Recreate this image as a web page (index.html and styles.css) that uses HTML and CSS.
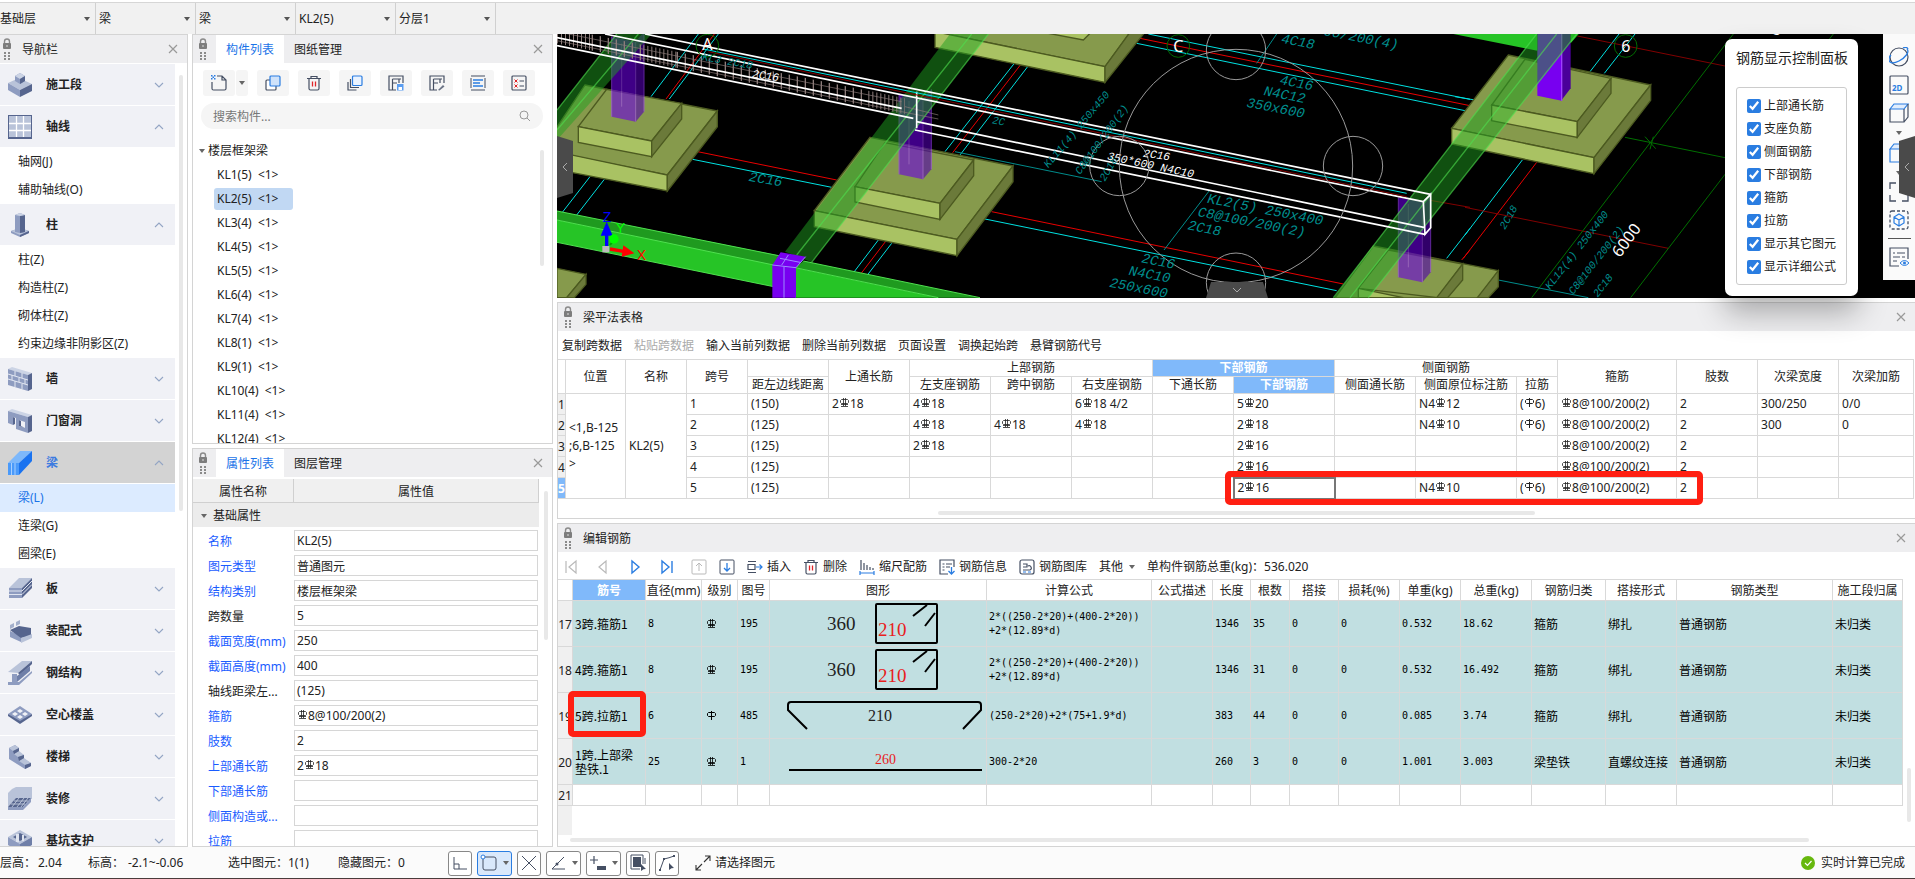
FILE: index.html
```html
<!DOCTYPE html>
<html lang="zh-CN">
  <head>
    <meta charset="UTF-8" />
    <meta name="viewport" content="width=device-width, initial-scale=1.0" />
    <title>梁平法表格</title>
    <link rel="stylesheet" href="styles.css">
  </head>
  <body>
    <!-- shared icons -->
    <svg class="defs">
      <symbol id="grip" viewBox="0 0 10 24">
        <path d="M2.5 7V4.5a2.5 2.5 0 0 1 5 0V7" fill="none" stroke="#8a8a8a" stroke-width="1.4" />
        <rect x="1" y="6" width="8" height="6" rx="1" fill="#7d7d7d" />
        <rect x="4.5" y="8" width="1" height="2" fill="#ddd" />
        <path d="M2 15h2v2H2zM6 15h2v2H6zM2 18h2v2H2zM6 18h2v2H6zM2 21h2v2H2zM6 21h2v2H6z" fill="#8a8a8a" />
      </symbol>
      <symbol id="close" viewBox="0 0 10 10"><path d="M1 1l8 8M9 1l-8 8" fill="none" stroke="#999" stroke-width="1.2" /></symbol>
      <symbol id="down" viewBox="0 0 10 6"><path d="M1 1l4 4 4-4" fill="none" stroke="#93a5c4" stroke-width="1.1" /></symbol>
      <symbol id="up" viewBox="0 0 10 6"><path d="M1 5l4-4 4 4" fill="none" stroke="#93a5c4" stroke-width="1.1" /></symbol>
      <symbol id="hrb" viewBox="0 0 9 9"><path d="M1.5 1.5h6l1 1v2l-1 1h-6l-1-1v-2zM3.500 0v8M5.500 0v8M1 6.500h7M1 8.500h7" fill="none" stroke="currentColor" stroke-width=".8" /></symbol>
      <symbol id="hpb" viewBox="0 0 9 9"><path d="M1.500 1.500h6l1 1v2l-1 1h-6l-1-1v-2zM4.500 0v9" fill="none" stroke="currentColor" /></symbol>
      <symbol id="trash" viewBox="0 0 16 16"><path d="M1 3.500h14M5 3.500v-2h6v2M3 3.500v10q0 1.500 1.500 1.500h7q1.500 0 1.500-1.500v-10" fill="none" stroke="#454f63" stroke-width="1.200" /><path d="M6.500 6.500v5M9.500 6.500v5" stroke="#e0262a" stroke-width="1.300" /></symbol>
    </svg>

    <div class="topbar">
      <label class="combo first"><select aria-label="楼层"><option>基础层</option></select></label>
      <label class="combo"><select aria-label="构件大类"><option>梁</option></select></label>
      <label class="combo"><select aria-label="构件类型"><option>梁</option></select></label>
      <label class="combo"><select aria-label="构件"><option>KL2(5)</option></select></label>
      <label class="combo"><select aria-label="分层"><option>分层1</option></select></label>
    </div>

    <main class="main">
      <nav class="nav">
        <div class="panel-head">
          <svg class="grip"><use href="#grip" /></svg>
          <span class="head-title">导航栏</span>
          <button class="close" aria-label="关闭"><svg><use href="#close" /></svg></button>
        </div>
        <div class="nav-list">
          <button class="group"><svg class="gi" viewBox="0 0 24 24"><path d="M0 10L11 5l13 6-12 6z" fill="#b9c3d9" /><path d="M0 10l12 7v7L0 17z" fill="#8e9cc0" /><path d="M24 11v7l-12 6v-7z" fill="#56658e" /><path d="M7 3l5-3 5 3v5l-5 3-5-3z" fill="#8e9cc0" /><path d="M7 3l5-3 5 3-5 3z" fill="#ccd4e5" /><path d="M12 6l5-3v5l-5 3z" fill="#56658e" /></svg>施工段<svg class="chev"><use href="#down" /></svg></button>
          <button class="group"><svg class="gi" viewBox="0 0 24 24"><path d="M0 0h24v24H0z" fill="#56658e" /><path d="M1 1h22v21H1z" fill="#b9c3d9" /><path d="M8.500 1v21M15.500 1v21M1 8.500h22M1 15.500h22" stroke="#fff" stroke-width="1.300" /></svg>轴线<svg class="chev"><use href="#up" /></svg></button>
          <a class="item" href="#">轴网(J)</a>
          <a class="item" href="#">辅助轴线(O)</a>
          <button class="group"><svg class="gi" viewBox="0 0 24 24"><path d="M3 18l9-3 9 3v2l-9 4-9-4z" fill="#8e9cc0" /><path d="M3 18l9-3 9 3-9 4z" fill="#b9c3d9" /><path d="M12 22l9-4v2l-9 4z" fill="#56658e" /><path d="M7 2l5-2 5 2v17l-5 1-5-1z" fill="#8e9cc0" /><path d="M12 3l5-1v17l-5 1z" fill="#56658e" /><path d="M7 2l5-2 5 2-5 1z" fill="#ccd4e5" /></svg>柱<svg class="chev"><use href="#up" /></svg></button>
          <a class="item" href="#">柱(Z)</a>
          <a class="item" href="#">构造柱(Z)</a>
          <a class="item" href="#">砌体柱(Z)</a>
          <a class="item" href="#">约束边缘非阴影区(Z)</a>
          <button class="group"><svg class="gi" viewBox="0 0 24 24"><path d="M0 2l4-2 20 6-4 2z" fill="#ccd4e5" /><path d="M0 2l20 6v16L0 18z" fill="#8e9cc0" /><path d="M20 8l4-2v16l-4 2z" fill="#56658e" /><path d="M0 7l20 6M0 12l20 6M7 4v5M14 6v5M4 8v5M11 11v4M17 12v5M7 14v6M14 17v5" stroke="#e3e8f2" stroke-width="1" fill="none" /></svg>墙<svg class="chev"><use href="#down" /></svg></button>
          <button class="group"><svg class="gi" viewBox="0 0 24 24"><path d="M0 2l4-2 20 6-4 2z" fill="#ccd4e5" /><path fill-rule="evenodd" d="M0 2l20 6v16l-12-4V9L5 8v8l-5-2zM11 11v6l6 2v-6z" fill="#8e9cc0" /><path d="M20 8l4-2v16l-4 2zM5 8l2 1v6l-2 1zM11 11l2 1v5l4 2-6-2z" fill="#56658e" /></svg>门窗洞<svg class="chev"><use href="#down" /></svg></button>
          <button class="group current"><svg class="gi" viewBox="0 0 24 24"><path d="M0 12L12 0h12L11 12z" fill="#7db8fb" /><path d="M0 12h11v12H0z" fill="#4a9afa" /><path d="M11 12L24 0v10L11 24z" fill="#1a73f0" /><path d="M3.500 12v12M7 12v12" stroke="#a8d0ff" /></svg>梁<svg class="chev"><use href="#up" /></svg></button>
          <a class="item active" href="#">梁(L)</a>
          <a class="item" href="#">连梁(G)</a>
          <a class="item" href="#">圈梁(E)</a>
          <button class="group"><svg class="gi" viewBox="0 0 24 24"><path d="M1 11L11 1h13L14 11z" fill="#b9c3d9" /><path d="M1 11h13v10H1z" fill="#8e9cc0" /><path d="M14 11L24 1v10L14 21z" fill="#56658e" /><path d="M1 14h13L24 4M1 17.500h13L24 7.500" stroke="#dfe4ef" fill="none" /></svg>板<svg class="chev"><use href="#down" /></svg></button>
          <button class="group"><svg class="gi" viewBox="0 0 24 24"><path d="M2 12l11 5v6L2 18z" fill="#8e9cc0" /><path d="M2 11l9-4 12 2v8l-10 2z" fill="#56658e" /><path d="M13 19l11-4v4l-11 5z" fill="#b9c3d9" /><path d="M2 6l4-2v4L2 10zM8 3l4-2v4L8 7z" fill="#a3afcb" /></svg>装配式<svg class="chev"><use href="#down" /></svg></button>
          <button class="group"><svg class="gi" viewBox="0 0 24 24"><path d="M0 11L14 0h10L10 12z" fill="#b9c3d9" /><path d="M10 12L24 0v3L12 14z" fill="#56658e" /><path d="M4 13h5v8H4z" fill="#8e9cc0" /><path d="M9 15L22 5v5L9 21z" fill="#6f7fa8" /><path d="M0 21h11L24 10v2L11 24H0z" fill="#8e9cc0" /></svg>钢结构<svg class="chev"><use href="#down" /></svg></button>
          <button class="group"><svg class="gi" viewBox="0 0 24 24"><path d="M0 11l12-8 12 8-12 9z" fill="#8e9cc0" /><path d="M4 11l3-2 3 2-3 2zM9 8l3-2 3 2-3 2zM9 14l3-2 3 2-3 2zM14 11l3-2 3 2-3 2z" fill="#f0f2f7" /><path d="M0 11l12 7 12-7v2l-12 8-12-8z" fill="#56658e" /></svg>空心楼盖<svg class="chev"><use href="#down" /></svg></button>
          <button class="group"><svg class="gi" viewBox="0 0 24 24"><path d="M1 3l6-3 4 3v5l5 2v4l7 4v3l-6 3L1 14z" fill="#8e9cc0" /><path d="M1 3l6-3 4 3-6 3zM6 9l5-3 5 4-6 2zM11 16l5-3 7 5-6 2z" fill="#b9c3d9" /><path d="M5 6l6-3v3L6 9zM10 12l6-2v3l-5 3zM17 20l6-2v3l-6 3z" fill="#56658e" /></svg>楼梯<svg class="chev"><use href="#down" /></svg></button>
          <button class="group"><svg class="gi" viewBox="0 0 24 24"><path d="M4 2L8 0h16v12H8L0 20V6z" fill="#b9c3d9" /><path d="M0 20L8 11h15l-8 9z" fill="#56658e" /><path d="M6 14h14M3 17h14M11 11l-7 9M16 11l-7 9M20 11l-7 9" stroke="#ccd4e5" stroke-width=".8" /><path d="M0 20h15l8-9v4l-8 8H0z" fill="#8e9cc0" /></svg>装修<svg class="chev"><use href="#down" /></svg></button>
          <button class="group"><svg class="gi" viewBox="0 0 24 24"><path d="M0 8l12-7 12 7-12 7z" fill="#b9c3d9" /><path d="M0 8l12 7v8L0 16z" fill="#8e9cc0" /><path d="M24 8v8l-12 7v-8z" fill="#6f7fa8" /><path d="M5 8l7-4 7 4-7 4z" fill="#56658e" /><path d="M8 5h3v8H8zM14 6h2v6h-2z" fill="#dfe4ef" /></svg>基坑支护<svg class="chev"><use href="#down" /></svg></button>
        </div>
        <i class="vscroll nav-scroll"></i>
      </nav>

      <div class="side">
        <section class="panel">
          <div class="panel-head">
            <svg class="grip"><use href="#grip" /></svg>
            <button class="tab on">构件列表</button>
            <button class="tab">图纸管理</button>
            <button class="close" aria-label="关闭"><svg><use href="#close" /></svg></button>
          </div>
          <div class="tools">
            <div class="split">
              <button class="tool" aria-label="新建"><svg viewBox="0 0 16 16"><path d="M6 1h5l4 4v8.500q0 1.500-1.500 1.500h-11Q1 15 1 13.500V7M11 1v4h4" fill="none" stroke="#454f63" stroke-width="1.200" /><path d="M0 0h1.500v1.500H0zM3 0h1.500v1.500H3zM1.500 1.500H3V3H1.500zM0 3h1.500v1.500H0zM3 3h1.500v1.500H3z" fill="#2a7de1" /></svg></button>
              <button class="tool mini" aria-label="更多"><i class="caret"></i></button>
            </div>
            <button class="tool" aria-label="复制"><svg viewBox="0 0 16 16"><rect x="1" y="5" width="10" height="10" rx="1" fill="#fff" stroke="#454f63" stroke-width="1.200" /><rect x="5" y="1" width="10" height="10" rx="1" fill="#cfe2fa" stroke="#2a7de1" stroke-width="1.200" /></svg></button>
            <button class="tool" aria-label="删除"><svg><use href="#trash" /></svg></button>
            <button class="tool" aria-label="层间复制"><svg viewBox="0 0 16 16"><rect x="5.500" y="1" width="9.500" height="9.500" rx="1" fill="#eaf3ff" stroke="#2a7de1" stroke-width="1.200" /><path d="M3.500 4v8.500H12M1 7v8h8.500" fill="none" stroke="#454f63" stroke-width="1.200" /></svg></button>
            <button class="tool" aria-label="存档"><svg viewBox="0 0 16 16"><path d="M8 15H1V1h14v7M4.500 15V4M4.500 8H9M11 4v4M4.500 4H13" fill="none" stroke="#454f63" stroke-width="1.200" /><path d="M9 9h6.500v6.500H9z" fill="#5b9df0" /><path d="M10.500 12h3.500v3h-3.500z" fill="#fff" /></svg></button>
            <button class="tool" aria-label="提取"><svg viewBox="0 0 16 16"><path d="M8 15H1V1h14v7M4.500 15V4M4.500 8H9M11 4v4M4.500 4H13" fill="none" stroke="#454f63" stroke-width="1.200" /><path d="M9 15l5-5 1.500 1.500-5 4z" fill="#6a7385" /></svg></button>
            <button class="tool" aria-label="添加前后缀"><svg viewBox="0 0 16 16"><path d="M1 1h14M1 15h14" stroke="#454f63" stroke-width="1.200" /><path d="M1 3v10M15 3v10" stroke="#454f63" /><path d="M3 5h10M3 8h7M3 11h10" stroke="#2a7de1" stroke-width="1.300" /></svg></button>
            <button class="tool" aria-label="定义"><svg viewBox="0 0 16 16"><rect x="1" y="1" width="14" height="14" rx="1" fill="none" stroke="#454f63" stroke-width="1.200" /><path d="M8.500 6H13M8.500 11H13" stroke="#454f63" stroke-width="1.200" /><path d="M3.500 4.500l3 3m0-3l-3 3M3.500 9.500l3 3m0-3l-3 3" stroke="#e0262a" /></svg></button>
          </div>
          <label class="search"><input type="text" placeholder="搜索构件..." aria-label="搜索构件"><svg viewBox="0 0 12 12"><circle cx="5" cy="5" r="4" fill="none" stroke="#999" /><path d="M8 8l3 3" stroke="#999" /></svg></label>
          <div class="tree">
            <div class="tree-root"><i class="caret"></i>楼层框架梁</div>
            <ul>
              <li><a href="#">KL1(5) &nbsp;&lt;1&gt;</a></li>
              <li><a href="#" class="sel">KL2(5) &nbsp;&lt;1&gt;</a></li>
              <li><a href="#">KL3(4) &nbsp;&lt;1&gt;</a></li>
              <li><a href="#">KL4(5) &nbsp;&lt;1&gt;</a></li>
              <li><a href="#">KL5(5) &nbsp;&lt;1&gt;</a></li>
              <li><a href="#">KL6(4) &nbsp;&lt;1&gt;</a></li>
              <li><a href="#">KL7(4) &nbsp;&lt;1&gt;</a></li>
              <li><a href="#">KL8(1) &nbsp;&lt;1&gt;</a></li>
              <li><a href="#">KL9(1) &nbsp;&lt;1&gt;</a></li>
              <li><a href="#">KL10(4) &nbsp;&lt;1&gt;</a></li>
              <li><a href="#">KL11(4) &nbsp;&lt;1&gt;</a></li>
              <li><a href="#">KL12(4) &nbsp;&lt;1&gt;</a></li>
            </ul>
          </div>
          <i class="vscroll tree-scroll"></i>
        </section>

        <section class="panel">
          <div class="panel-head">
            <svg class="grip"><use href="#grip" /></svg>
            <button class="tab on">属性列表</button>
            <button class="tab">图层管理</button>
            <button class="close" aria-label="关闭"><svg><use href="#close" /></svg></button>
          </div>
          <div class="props">
            <div class="prop-head"><span>属性名称</span><span>属性值</span></div>
            <div class="prop-group"><i class="caret"></i>基础属性</div>
            <div class="prop"><label for="p1">名称</label><div class="field"><input id="p1" value="KL2(5)"></div></div>
            <div class="prop"><label for="p2">图元类型</label><div class="field"><input id="p2" value="普通图元"></div></div>
            <div class="prop"><label for="p3">结构类别</label><div class="field"><input id="p3" value="楼层框架梁"></div></div>
            <div class="prop plain"><label for="p4">跨数量</label><div class="field"><input id="p4" value="5"></div></div>
            <div class="prop"><label for="p5">截面宽度(mm)</label><div class="field"><input id="p5" value="250"></div></div>
            <div class="prop"><label for="p6">截面高度(mm)</label><div class="field"><input id="p6" value="400"></div></div>
            <div class="prop plain"><label for="p7">轴线距梁左...</label><div class="field"><input id="p7" value="(125)"></div></div>
            <div class="prop"><label for="p8">箍筋</label><div class="field"><svg class="bar"><use href="#hrb" /></svg><input id="p8" value="8@100/200(2)"></div></div>
            <div class="prop"><label for="p9">肢数</label><div class="field"><input id="p9" value="2"></div></div>
            <div class="prop"><label for="p10">上部通长筋</label><div class="field"><span>2</span><svg class="bar"><use href="#hrb" /></svg><input id="p10" value="18"></div></div>
            <div class="prop"><label for="p11">下部通长筋</label><div class="field"><input id="p11"></div></div>
            <div class="prop"><label for="p12">侧面构造或...</label><div class="field"><input id="p12"></div></div>
            <div class="prop"><label for="p13">拉筋</label><div class="field"><input id="p13"></div></div>
          </div>
          <i class="vscroll prop-scroll"></i>
        </section>
      </div>

      <div class="work">
        <div class="view">
          <!-- 3D model view -->
          <svg class="scene" viewBox="6 102 4074 792" preserveAspectRatio="xMinYMin slice">
            <defs>
              <g id="col"><path d="M0 0l72 15v240l-72-15z" fill="#6a00e0" /><path d="M72 15l25-30v240l-25 30z" fill="#5200b0" /><path d="M0 0v240M30 20v190M72 15v240M97-15v240" stroke="#a040ff" stroke-width="3" /></g>
            </defs>
            <!-- axis lines -->
            <g class="cyan">
              <path d="M105 530L22 637M148 538L65 645M430 102L288 290M490 102L343 297M413 478L830 562M1290 657L2345 872M970 720L897 816M1010 730L938 824M1378 190L1170 455M1418 200L1215 465M1780 102L2745 298M1745 130L2730 332M2745 685L2675 775M3192 102L3105 215M3240 102L3148 220M2902 480L2730 705M2700 290L2760 300" />
            </g>
            <g class="red">
              <path d="M478 102L333 297M428 455L845 540M1310 635L2365 852M992 724L917 822M1400 190L1193 458M1755 115L2745 317M2745 750L2720 780M2945 487L2725 775" />
            </g>
            <path class="darkred" d="M3067 108L3510 198M2730 622L3340 745M2620 600L2745 622" />
            <path class="green" d="M3535 102L2930 893M3510 523L3227 893M3835 102L3510 523M3210 412L3510 473M3270 410l32 36M3285 448l10-38" />
            <path class="teal-line" d="M1200 455L1640 545M1963 572L1827 750M2165 102L2105 190M2830 840L3100 893" />

            <!-- footings -->
            <g class="foot">
              <path class="t" d="M6 805l87 18-58 70H6z" /><path class="r" d="M93 823v30l-35 40H35z" />
              <path class="t" d="M90 255l397 78-150 192L-40 450z" /><path class="f" d="M-40 446l377 79v48L-40 500z" /><path class="r" d="M337 525l150-192v47L337 573z" />
              <path class="t" d="M155 268l225 42-90 113-220-43z" /><path class="f" d="M70 380l220 43v47L70 427z" /><path class="r" d="M290 423l90-113v47l-90 113z" />
              <path class="t" d="M945 412l429 86-168 220-428-86z" /><path class="f" d="M778 632l428 86v49l-428-87z" /><path class="r" d="M1206 718l168-220v47l-168 222z" />
              <path class="t" d="M990 428l266 52-101 130-255-50z" /><path class="f" d="M900 560l255 50v48l-255-52z" /><path class="r" d="M1155 610l101-130v47l-101 131z" />
              <path class="t" d="M1140 90h590l-80 110-510-105z" /><path class="f" d="M1140 95l510 105v47L1140 142z" /><path class="r" d="M1650 200l80-110h45l-125 157z" />
              <path class="f" d="M1480 100l105 20 20-20z" />
              <path class="t" d="M2455 738l375 74-60 82h-430z" /><path class="r" d="M2830 812v48l-30 33h-33z" /><path class="t" d="M2500 750l223 42-75 101-238-28z" /><path class="f" d="M2410 865l135 28h-135z" /><path class="r" d="M2723 792v48l-45 53h-33z" />
              <path class="t" d="M2860 165l427 90-170 218-427-88z" /><path class="f" d="M2690 385l427 88v48l-427-89z" /><path class="r" d="M3117 473l170-218v46l-170 220z" />
              <path class="t" d="M2910 178l258 57-101 130-257-50z" /><path class="f" d="M2810 315l257 50v47l-257-50z" /><path class="r" d="M3067 365l101-130v45l-101 132z" />
            </g>

            <!-- columns -->
            <use href="#col" x="170" y="110" opacity=".6" />
            <use href="#col" x="1032" y="283" opacity=".6" />
            <use href="#col" x="2530" y="592" opacity=".6" />
            <path d="M2947 90h73v212l-73-15z" fill="#7800f0" /><path d="M3020 90h27v175l-27 35z" fill="#4a009a" /><path d="M3020 90v212" stroke="#a040ff" stroke-width="4" />
            <path d="M2695 102h252v50zM3047 102h24l-24 28z" fill="#26c426" />

            <!-- beams -->
            <g class="beam">
              <path d="M185 102h105L6 420v-90z" />
              <path d="M1185 102h115L770 787l-80-32z" />
              <path d="M2945 102h120L2440 893h-105z" />
              <path class="edge" d="M250 102L6 390M185 102L6 330M1250 102L725 765M1300 102L770 787M3005 102L2385 893M2945 102L2335 893M3065 102L2440 893" />
            </g>
            <path d="M6 633l684 137-30 30L6 660z" fill="#1f9a1f" /><path d="M6 660l650 135v65L6 727z" fill="#26c426" />
            <path d="M745 783l530 110h-125L720 803z" fill="#1f9a1f" /><path d="M720 803l430 90H720z" fill="#26c426" />
            <path d="M6 633l680 137M6 660l650 135M6 727l650 133M745 783l530 110M720 803l430 90" stroke="#4fe04f" stroke-width="3" />
            <path d="M652 795l25-38 75 13-29 33v90h-71z" fill="#7800f0" /><path d="M652 795l71 8 29-33M687 800v93M675 775l60 12M700 765l-20 30" fill="none" stroke="#9c8cff" stroke-width="3" />

            <!-- rebar cage -->
            <g transform="skewY(11.5)" class="cage">
              <path d="M6 105h104M265 105h100M940 105h110" stroke-dasharray="3 9" />
              <path d="M110 105h155M365 105h575" stroke-dasharray="4 20" />
            </g>
            <path class="cage-line" d="M6 95L1040 305M6 122L1040 335M1040 335l110 22M1050 320l100 25" />
            <path class="white" d="M270 102L2627 583M150 102L2605 605M6 113L1040 325M6 137L1075 355M1085 365L2610 683M1080 390L2610 703M2605 605l22-22v100l-17 20zM1085 275v110" />
            <path class="cyan" d="M445 147L2555 580" />
            <path class="darkred" d="M460 155L2555 590" />

            <!-- orbit circles -->
            <g class="orbit">
              <circle cx="2043" cy="498" r="350" /><circle cx="2043" cy="150" r="89" /><circle cx="1693" cy="498" r="89" /><circle cx="2394" cy="498" r="89" /><circle cx="2043" cy="848" r="89" />
            </g>
            <g class="axis-circle"><circle cx="457" cy="137" r="34" /><circle cx="1870" cy="138" r="34" /><circle cx="3212" cy="138" r="34" /></g>
            <g class="axis-name"><text x="442" y="150">A</text><text x="1855" y="155">C</text><text x="3199" y="155">6</text><text transform="translate(3195 775) rotate(-54)">6000</text><text transform="translate(3665 112) rotate(-54)">00</text></g>

            <g class="note">
              <text transform="translate(580 542) rotate(10)">2C16</text>
              <text transform="translate(2177 128) rotate(11)">4C18</text>
              <text transform="translate(2305 105) rotate(11)">00/200(4)</text>
              <text transform="translate(2173 252) rotate(11)">4C16</text>
              <text transform="translate(2125 285) rotate(11)">N4C12</text>
              <text transform="translate(2073 320) rotate(11)">350x600</text>
              <text transform="translate(1955 608) rotate(11)">KL2(5) 250x400</text>
              <text transform="translate(1927 648) rotate(11)">C8@100/200(2)</text>
              <text transform="translate(1897 688) rotate(11)">2C18</text>
              <text transform="translate(1758 787) rotate(11)">2C16</text>
              <text transform="translate(1720 824) rotate(11)">N4C10</text>
              <text transform="translate(1662 860) rotate(11)">250x600</text>
            </g>
            <g class="note small">
              <text transform="translate(1480 505) rotate(-50)">KL11(4) 250x450</text>
              <text transform="translate(1575 525) rotate(-54)">C8@100/200(2)</text>
              <text transform="translate(1650 545) rotate(-60)">2C18</text>
              <text transform="translate(2850 690) rotate(-60)">2C18</text>
              <text transform="translate(2985 870) rotate(-52)">KL12(4) 250x400</text>
              <text transform="translate(3055 885) rotate(-52)">C8@100/200(2)</text>
              <text transform="translate(3128 893) rotate(-52)">2C18</text>
              <text transform="translate(440 180) rotate(10)">KL3 2C18</text>
              <text transform="translate(1310 370) rotate(10)">2C</text>
            </g>
            <g class="label">
              <text transform="translate(590 232) rotate(8)">2C16</text>
              <text transform="translate(1763 470) rotate(8)">2C16</text>
              <text transform="translate(1655 478) rotate(12)">350*600 N4C10</text>
            </g>

            <!-- coordinate axes -->
            <path d="M155 740v-40" stroke="#00f" stroke-width="10" /><path d="M137 707l18-42 18 42z" fill="#00f" />
            <path d="M165 735l14-18" stroke="#0a0" stroke-width="6" /><circle cx="177" cy="717" r="14" fill="#0f0" />
            <path d="M165 747l40 7" stroke="#f00" stroke-width="10" /><path d="M205 736l33 24-38 10z" fill="#f00" />
            <path d="M142 738h21v19h-21z" fill="#bbb" />
            <g class="axes"><text x="143" y="667" fill="#00f">Z</text><text x="182" y="700" fill="#0f0">Y</text><text x="245" y="780" fill="#f00">X</text></g>
          </svg>

          <button class="handle left" aria-label="收起左侧"><svg viewBox="0 0 6 10"><path d="M5 1L1 5l4 4" fill="none" stroke="#aaa" /></svg></button>
          <button class="handle bottom" aria-label="收起下方"><svg viewBox="0 0 10 6"><path d="M1 1l4 4 4-4" fill="none" stroke="#aaa" /></svg></button>

          <div class="view-tools">
            <button aria-label="动态观察"><svg viewBox="0 0 20 20"><circle cx="10" cy="10" r="9" fill="none" stroke="#454f63" stroke-width="1.200" /><path d="M18 2c3 3-2 9-8 12S0 16 0 13c0-2 1-4 2-5M14 1c2-1 4-1 5 1" fill="none" stroke="#2a7de1" stroke-width="1.300" /></svg></button>
            <button aria-label="二维"><svg viewBox="0 0 20 20"><rect x="1" y="1" width="18" height="18" rx="1" fill="none" stroke="#454f63" stroke-width="1.200" /><text x="3" y="16" class="two-d">2D</text></svg></button>
            <button aria-label="西南等轴测"><svg viewBox="0 0 20 20"><path d="M1 6l4-5h14l-4 5z" fill="#e0edfd" stroke="#2a7de1" stroke-width="1.200" /><path d="M1 6v13h14V6M15 19l4-5V1" fill="none" stroke="#454f63" stroke-width="1.200" /></svg><i class="caret"></i></button>
            <button aria-label="实体显示"><svg viewBox="0 0 20 20"><path d="M1 6l4-5h14l-4 5z" fill="#e0edfd" stroke="#2a7de1" stroke-width="1.200" /><path d="M1 6v13h14V6M15 19l4-5V1" fill="none" stroke="#2a7de1" stroke-width="1.200" /></svg><i class="caret"></i></button>
            <button aria-label="全屏"><svg viewBox="0 0 20 20"><path d="M1 7V1h6M13 1h6v6M1 13v6h6M13 19h6v-6" fill="none" stroke="#454f63" stroke-width="1.300" /></svg></button>
            <button aria-label="局部三维"><svg viewBox="0 0 20 20"><rect x="1" y="1" width="18" height="18" rx="2" fill="none" stroke="#454f63" stroke-width="1.300" stroke-dasharray="3 2" /><path d="M10 4l5 3v6l-5 3-5-3V7zM5 7l5 3 5-3M10 10v6" fill="none" stroke="#2a7de1" stroke-width="1.200" /></svg></button>
            <hr>
            <button aria-label="显示设置"><svg viewBox="0 0 20 20"><path d="M19 12V1H1v18h9M4 6h2M8 6h8M4 10h7M13 10h3M4 14h4" fill="none" stroke="#454f63" stroke-width="1.200" /><path d="M11 16q4.500-5 9 0-4.500 5-9 0z" fill="none" stroke="#2a7de1" /><circle cx="15.500" cy="16" r="1.500" fill="#2a7de1" /></svg></button>
          </div>
          <button class="handle right" aria-label="收起右侧"><svg viewBox="0 0 6 10"><path d="M5 1L1 5l4 4" fill="none" stroke="#aaa" /></svg></button>

          <div class="rebar-panel">
            <h2>钢筋显示控制面板</h2>
            <div class="checks">
              <label><input type="checkbox" checked>上部通长筋</label>
              <label><input type="checkbox" checked>支座负筋</label>
              <label><input type="checkbox" checked>侧面钢筋</label>
              <label><input type="checkbox" checked>下部钢筋</label>
              <label><input type="checkbox" checked>箍筋</label>
              <label><input type="checkbox" checked>拉筋</label>
              <label><input type="checkbox" checked>显示其它图元</label>
              <label><input type="checkbox" checked>显示详细公式</label>
            </div>
          </div>
        </div>

        <section class="panel wide">
          <div class="panel-head">
            <svg class="grip"><use href="#grip" /></svg>
            <span class="head-title">梁平法表格</span>
            <button class="close" aria-label="关闭"><svg><use href="#close" /></svg></button>
          </div>
          <div class="menu">
            <button>复制跨数据</button>
            <button disabled>粘贴跨数据</button>
            <button>输入当前列数据</button>
            <button>删除当前列数据</button>
            <button>页面设置</button>
            <button>调换起始跨</button>
            <button>悬臂钢筋代号</button>
          </div>
          <table class="grid span-grid">
            <colgroup><col><col><col><col><col><col><col><col><col><col><col><col><col><col><col><col><col><col></colgroup>
            <thead>
              <tr><th rowspan="2"></th><th rowspan="2">位置</th><th rowspan="2">名称</th><th rowspan="2">跨号</th><th></th><th rowspan="2">上通长筋</th><th colspan="3">上部钢筋</th><th colspan="2" class="hl">下部钢筋</th><th colspan="3">侧面钢筋</th><th rowspan="2">箍筋</th><th rowspan="2">肢数</th><th rowspan="2">次梁宽度</th><th rowspan="2">次梁加筋</th></tr>
              <tr><th>距左边线距离</th><th>左支座钢筋</th><th>跨中钢筋</th><th>右支座钢筋</th><th>下通长筋</th><th class="hl">下部钢筋</th><th>侧面通长筋</th><th>侧面原位标注筋</th><th>拉筋</th></tr>
            </thead>
            <tbody>
              <tr><th>1</th><td rowspan="5" class="pos">&lt;1,B-125<br>;6,B-125<br>&gt;</td><td rowspan="5">KL2(5)</td><td>1</td><td>(150)</td><td>2<svg class="bar"><use href="#hrb" /></svg>18</td><td>4<svg class="bar"><use href="#hrb" /></svg>18</td><td></td><td>6<svg class="bar"><use href="#hrb" /></svg>18 4/2</td><td></td><td>5<svg class="bar"><use href="#hrb" /></svg>20</td><td></td><td>N4<svg class="bar"><use href="#hrb" /></svg>12</td><td>(<svg class="bar"><use href="#hpb" /></svg>6)</td><td><svg class="bar"><use href="#hrb" /></svg>8@100/200(2)</td><td>2</td><td>300/250</td><td>0/0</td></tr>
              <tr><th>2</th><td>2</td><td>(125)</td><td></td><td>4<svg class="bar"><use href="#hrb" /></svg>18</td><td>4<svg class="bar"><use href="#hrb" /></svg>18</td><td>4<svg class="bar"><use href="#hrb" /></svg>18</td><td></td><td>2<svg class="bar"><use href="#hrb" /></svg>18</td><td></td><td>N4<svg class="bar"><use href="#hrb" /></svg>10</td><td>(<svg class="bar"><use href="#hpb" /></svg>6)</td><td><svg class="bar"><use href="#hrb" /></svg>8@100/200(2)</td><td>2</td><td>300</td><td>0</td></tr>
              <tr><th>3</th><td>3</td><td>(125)</td><td></td><td>2<svg class="bar"><use href="#hrb" /></svg>18</td><td></td><td></td><td></td><td>2<svg class="bar"><use href="#hrb" /></svg>16</td><td></td><td></td><td></td><td><svg class="bar"><use href="#hrb" /></svg>8@100/200(2)</td><td>2</td><td></td><td></td></tr>
              <tr><th>4</th><td>4</td><td>(125)</td><td></td><td></td><td></td><td></td><td></td><td>2<svg class="bar"><use href="#hrb" /></svg>16</td><td></td><td></td><td></td><td><svg class="bar"><use href="#hrb" /></svg>8@100/200(2)</td><td>2</td><td></td><td></td></tr>
              <tr><th class="hl">5</th><td>5</td><td>(125)</td><td></td><td></td><td></td><td></td><td></td><td class="picked">2<svg class="bar"><use href="#hrb" /></svg>16</td><td></td><td>N4<svg class="bar"><use href="#hrb" /></svg>10</td><td>(<svg class="bar"><use href="#hpb" /></svg>6)</td><td><svg class="bar"><use href="#hrb" /></svg>8@100/200(2)</td><td>2</td><td></td><td></td></tr>
            </tbody>
          </table>
          <i class="hscroll span-scroll"></i>
          <div class="mark mark-row"></div>
        </section>

        <section class="panel wide">
          <div class="panel-head">
            <svg class="grip"><use href="#grip" /></svg>
            <span class="head-title">编辑钢筋</span>
            <button class="close" aria-label="关闭"><svg><use href="#close" /></svg></button>
          </div>
          <div class="edit-tools">
            <div class="steps">
              <button aria-label="首行"><svg viewBox="0 0 16 16"><path d="M3 2v12M13 2v12L6 8z" fill="none" stroke="#b9b9b9" stroke-width="1.200" /></svg></button>
              <button aria-label="上一行"><svg viewBox="0 0 16 16"><path d="M11 2v12L4 8z" fill="none" stroke="#b9b9b9" stroke-width="1.200" /></svg></button>
              <button aria-label="下一行"><svg viewBox="0 0 16 16"><path d="M5 2v12l7-6z" fill="none" stroke="#2a7de1" stroke-width="1.400" /></svg></button>
              <button aria-label="末行"><svg viewBox="0 0 16 16"><path d="M13 2v12M3 2v12l7-6z" fill="none" stroke="#2a7de1" stroke-width="1.400" /></svg></button>
            </div>
            <div class="moves">
              <button aria-label="上移"><svg viewBox="0 0 16 16"><rect x="1" y="1" width="14" height="14" rx="1" fill="none" stroke="#b9b9b9" /><path d="M8 12V4M5 7l3-3 3 3" fill="none" stroke="#b9b9b9" /></svg></button>
              <button aria-label="下移"><svg viewBox="0 0 16 16"><rect x="1" y="1" width="14" height="14" rx="1" fill="none" stroke="#454f63" /><path d="M8 4v8M5 9l3 3 3-3" fill="none" stroke="#2a7de1" stroke-width="1.300" /></svg></button>
            </div>
            <button><svg viewBox="0 0 16 16"><path d="M1 2.500h8M1 13.500h8M1 5.500h7v5H1z" fill="none" stroke="#454f63" stroke-width="1.200" /><path d="M9 8h6M12.500 5.500L15 8l-2.500 2.500" fill="none" stroke="#2a7de1" stroke-width="1.200" /></svg>插入</button>
            <button><svg><use href="#trash" /></svg>删除</button>
            <button><svg viewBox="0 0 16 16"><path d="M2 1v10M5 4v7M8 6v5M11 8v3M14 9v2" stroke="#454f63" stroke-width="1.200" /><path d="M1 14h14M1 12v4M15 12v4" stroke="#2a7de1" stroke-width="1.200" /></svg>缩尺配筋</button>
            <button><svg viewBox="0 0 16 16"><path d="M15 8V1H1v14h8M3.500 5h2M7 5h6M3.500 8h2M7 8h4M3.500 11h2" fill="none" stroke="#454f63" stroke-width="1.200" /><path d="M12.500 8v7M9.500 12l3 3 3-3" fill="none" stroke="#2a7de1" stroke-width="1.300" /></svg>钢筋信息</button>
            <button><svg viewBox="0 0 16 16"><rect x="1" y="1" width="14" height="14" rx="2" fill="none" stroke="#454f63" stroke-width="1.200" /><path d="M4 5h4v3H4M4 11h7q2-1 1-3t-3-1" fill="none" stroke="#454f63" stroke-width="1.200" /><path d="M4 13h3M9 13h3" stroke="#2a7de1" /></svg>钢筋图库</button>
            <button class="other">其他<i class="caret"></i></button>
            <span>单构件钢筋总重(kg)：536.020</span>
          </div>
          <div class="edit-body">
            <table class="grid bar-grid">
              <colgroup><col><col><col><col><col><col><col><col><col><col><col><col><col><col><col><col><col><col></colgroup>
              <thead>
                <tr><th></th><th class="hl">筋号</th><th>直径(mm)</th><th>级别</th><th>图号</th><th>图形</th><th>计算公式</th><th>公式描述</th><th>长度</th><th>根数</th><th>搭接</th><th>损耗(%)</th><th>单重(kg)</th><th>总重(kg)</th><th>钢筋归类</th><th>搭接形式</th><th>钢筋类型</th><th>施工段归属</th></tr>
              </thead>
              <tbody>
                <tr><th>17</th><td class="zh">3跨.箍筋1</td><td>8</td><td class="grade"><svg class="bar"><use href="#hrb" /></svg></td><td>195</td><td class="shape"><svg viewBox="0 0 216 45"><text x="57" y="29" class="big">360</text><rect x="106" y="3" width="61" height="39" rx="1" /><text x="108" y="35" class="big dim">210</text><path d="M157 4l-14 11M165 12l-10 13" /></svg></td><td>2*((250-2*20)+(400-2*20))<br>+2*(12.89*d)</td><td></td><td>1346</td><td>35</td><td>0</td><td>0</td><td>0.532</td><td>18.62</td><td class="zh">箍筋</td><td class="zh">绑扎</td><td class="zh">普通钢筋</td><td class="zh">未归类</td></tr>
                <tr><th>18</th><td class="zh">4跨.箍筋1</td><td>8</td><td class="grade"><svg class="bar"><use href="#hrb" /></svg></td><td>195</td><td class="shape"><svg viewBox="0 0 216 45"><text x="57" y="29" class="big">360</text><rect x="106" y="3" width="61" height="39" rx="1" /><text x="108" y="35" class="big dim">210</text><path d="M157 4l-14 11M165 12l-10 13" /></svg></td><td>2*((250-2*20)+(400-2*20))<br>+2*(12.89*d)</td><td></td><td>1346</td><td>31</td><td>0</td><td>0</td><td>0.532</td><td>16.492</td><td class="zh">箍筋</td><td class="zh">绑扎</td><td class="zh">普通钢筋</td><td class="zh">未归类</td></tr>
                <tr><th>19</th><td class="zh">5跨.拉筋1</td><td>6</td><td class="grade"><svg class="bar"><use href="#hpb" /></svg></td><td>485</td><td class="shape"><svg viewBox="0 0 216 45"><path d="M37 36L18 17V12q0-3 3-3h187q3 0 3 3v5l-18 19" /><text x="98" y="28" class="mid">210</text></svg></td><td>(250-2*20)+2*(75+1.9*d)</td><td></td><td>383</td><td>44</td><td>0</td><td>0</td><td>0.085</td><td>3.74</td><td class="zh">箍筋</td><td class="zh">绑扎</td><td class="zh">普通钢筋</td><td class="zh">未归类</td></tr>
                <tr><th>20</th><td class="zh">1跨.上部梁<br>垫铁.1</td><td>25</td><td class="grade"><svg class="bar"><use href="#hrb" /></svg></td><td>1</td><td class="shape"><svg viewBox="0 0 216 45"><text x="105" y="25" class="low dim">260</text><path d="M19 31h193" /></svg></td><td>300-2*20</td><td></td><td>260</td><td>3</td><td>0</td><td>0</td><td>1.001</td><td>3.003</td><td class="zh">梁垫铁</td><td class="zh">直螺纹连接</td><td class="zh">普通钢筋</td><td class="zh">未归类</td></tr>
                <tr class="blank"><th>21</th><td></td><td></td><td></td><td></td><td></td><td></td><td></td><td></td><td></td><td></td><td></td><td></td><td></td><td></td><td></td><td></td><td></td></tr>
              </tbody>
            </table>
            <i class="gutter"></i>
          </div>
          <i class="hscroll bar-scroll"></i>
          <i class="vscroll edit-scroll"></i>
          <div class="mark mark-cell"></div>
        </section>
      </div>
    </main>

    <footer class="status">
      <span class="s1">层高：</span><span class="s2">2.04</span>
      <span class="s3">标高：</span><span class="s4">-2.1~-0.06</span>
      <span class="s5">选中图元：</span><span class="s6">1(1)</span>
      <span class="s7">隐藏图元：</span><span class="s8">0</span>
      <div class="snaps">
        <button aria-label="正交"><svg viewBox="0 0 18 18"><path d="M3 3v12h13M3 10h5v5" fill="none" stroke="#454f63" /></svg></button>
        <button class="on" aria-label="捕捉"><svg viewBox="0 0 18 18"><rect x="3" y="3" width="13" height="13" rx="2" fill="none" stroke="#454f63" /><circle cx="3" cy="3" r="2" fill="#fff" stroke="#2a7de1" /></svg><i class="caret"></i></button>
        <button aria-label="交点"><svg viewBox="0 0 18 18"><path d="M2 2l14 14M16 2L2 16" fill="none" stroke="#454f63" /></svg></button>
        <button aria-label="角度"><svg viewBox="0 0 18 18"><path d="M15 3L3 15h13" fill="none" stroke="#454f63" /><circle cx="8" cy="10" r="1.500" fill="#454f63" /></svg><i class="caret"></i></button>
        <button aria-label="动态输入"><svg viewBox="0 0 18 18"><path d="M1 6h8M5 2v8" stroke="#454f63" stroke-width="1.200" /><path d="M8 12h9v4H8z" fill="#454f63" /></svg><i class="caret"></i></button>
        <button aria-label="选择"><svg viewBox="0 0 18 18"><path d="M4 3h8v10H4z" fill="#454f63" /><path d="M2 1h12v9M2 1v14h9M16 4v6" fill="none" stroke="#454f63" /><path d="M12 10l5 5-2.500.2L12 17z" fill="#454f63" /></svg></button>
        <button aria-label="折线"><svg viewBox="0 0 18 18"><path d="M2 16L6 5q5-1 10-3" fill="none" stroke="#454f63" /><path d="M11 9l5 5-2.500.2L11 16zM1 15h2v2H1zM5 4h2v2H5zM15 1h2v2h-2z" fill="#454f63" /></svg></button>
      </div>
      <svg class="expand" viewBox="0 0 16 16"><path d="M9 7l6-6M10 1h5v5M7 9l-6 6M1 10v5h5" fill="none" stroke="#333" stroke-width="1.100" /></svg>
      <span>请选择图元</span>
      <span class="done"><svg viewBox="0 0 14 14"><circle cx="7" cy="7" r="7" fill="#67b80e" /><path d="M4 7l2.500 2.500L10.500 5" fill="none" stroke="#fff" stroke-width="1.200" /></svg>实时计算已完成</span>
    </footer>
  </body>
</html>
```
FILE: styles.css
```css
* {
  box-sizing: border-box;
}

body {
  margin: 0;
  height: 100vh;
  display: flex;
  flex-direction: column;
  overflow: hidden;
  background: #fff;
  color: #222;
  font: 12px/16px "Noto Sans", "Noto Sans CJK SC", sans-serif;
  border-bottom: 1px solid #4a3c3c;
}

button,
input,
select {
  font: inherit;
  color: inherit;
  border: 0;
  padding: 0;
  margin: 0;
  background: none;
}

a {
  color: inherit;
  text-decoration: none;
}

.defs {
  position: absolute;
  width: 0;
  height: 0;
}

.caret {
  flex: none;
  width: 0;
  height: 0;
  border: 3px solid transparent;
  border-top: 4px solid #666;
  border-bottom: 0;
}

/* top bar */
.topbar {
  flex: none;
  display: flex;
  height: 32px;
  margin-top: 2px;
  background: #f1f1f1;
  border-top: 1px solid #d6d6d6;
}

.combo {
  position: relative;
  width: 100px;
  border-right: 1px solid #d0d0d0;
}

.combo.first {
  width: 96px;
}

.combo::after {
  content: "";
  position: absolute;
  right: 5px;
  top: 14px;
  border: 3px solid transparent;
  border-top: 4px solid #555;
  border-bottom: 0;
}

.combo select {
  appearance: none;
  width: 100%;
  height: 100%;
  padding-left: 3px;
}

.combo.first select {
  padding-left: 0;
}

.main {
  flex: 1;
  min-height: 0;
  display: flex;
  gap: 4px;
}

/* panels */
.panel {
  position: relative;
  display: flex;
  flex-direction: column;
  min-height: 0;
  overflow: hidden;
  border: 1px solid #d4d4d4;
}

.panel.wide {
  border-right: 0;
}

.panel-head {
  flex: none;
  display: flex;
  align-items: center;
  height: 28px;
  background: #eeeef0;
}

.head-title {
  padding-top: 2px;
}

.grip {
  flex: none;
  width: 10px;
  height: 24px;
  margin: 0 8px 0 5px;
}

.nav .grip {
  margin: 0 10px 0 2px;
}

.panel.wide .grip {
  margin: 0 10px 0 5px;
}

.close {
  margin-left: auto;
  width: 10px;
  height: 10px;
  margin-right: 9px;
}

.close svg {
  display: block;
  width: 10px;
  height: 10px;
}

.tab {
  height: 28px;
  padding: 2px 10px 0;
}

.tab.on {
  background: #fff;
  color: #1a73e8;
}

.vscroll,
.hscroll {
  position: absolute;
  background: #e8e8e8;
  border-radius: 2px;
}

/* navigation */
.nav {
  position: relative;
  flex: none;
  width: 188px;
  display: flex;
  flex-direction: column;
  overflow: hidden;
  border: 1px solid #d4d4d4;
  border-left: 0;
}

.nav-list {
  width: 175px;
  flex: 1;
  min-height: 0;
  overflow: hidden;
  margin-top: 1px;
}

.group {
  display: flex;
  align-items: center;
  width: 100%;
  height: 42px;
  padding: 0 11px 0 8px;
  background: #f0f1f6;
  border-bottom: 1px solid #fff;
  font-weight: bold;
}

.gi {
  width: 24px;
  height: 24px;
  margin-right: 14px;
}

.chev {
  width: 10px;
  height: 6px;
  margin-left: auto;
}

.group.current {
  background: #d3d3d3;
  color: #3d7be0;
}

.item {
  display: block;
  height: 28px;
  padding-left: 18px;
  line-height: 28px;
}

.item.active {
  background: #dcebff;
  color: #1a73e8;
}

.nav-scroll {
  right: 4px;
  top: 40px;
  width: 4px;
  height: 436px;
}

/* component list and properties */
.side {
  flex: none;
  width: 361px;
  display: grid;
  grid-template-rows: 410fr 399fr;
  gap: 4px;
}

.tools {
  flex: none;
  display: flex;
  gap: 9px;
  padding: 7px 10px;
}

.split {
  display: flex;
  gap: 1px;
}

.tool {
  display: flex;
  align-items: center;
  justify-content: center;
  width: 32px;
  height: 26px;
  background: #f5f5f5;
  border-radius: 3px;
}

.tool.mini {
  width: 12px;
}

.tool svg {
  width: 16px;
  height: 16px;
}

.search {
  flex: none;
  display: flex;
  align-items: center;
  height: 26px;
  margin: 0 9px 0 8px;
  padding: 0 12px;
  background: #f5f5f5;
  border-radius: 13px;
}

.search input {
  flex: 1;
  padding-top: 2px;
  outline: 0;
}

.search input::placeholder {
  color: #777;
}

.search svg {
  width: 12px;
  height: 12px;
}

.tree {
  flex: 1;
  min-height: 0;
  overflow: hidden;
  padding-top: 10px;
}

.tree-root,
.prop-group {
  display: flex;
  align-items: center;
  gap: 3px;
  height: 24px;
  padding-left: 6px;
}

.tree ul {
  margin: 0;
  padding: 0 0 0 21px;
  list-style: none;
}

.tree li {
  height: 24px;
}

.tree a {
  display: inline-block;
  min-width: 79px;
  margin-top: 1px;
  padding: 3px;
  border-radius: 3px;
}

.tree a.sel {
  background: #c1d8f3;
}

.tree-scroll {
  right: 8px;
  top: 115px;
  width: 4px;
  height: 116px;
}

.props {
  width: 346px;
  margin-top: 2px;
}

.prop-head {
  display: grid;
  grid-template-columns: 101px 1fr;
  height: 24px;
  text-align: center;
  background: #f0f0f0;
  border-bottom: 1px solid #d0d0d0;
}

.prop-head span {
  padding-top: 5px;
  border-right: 1px solid #d0d0d0;
}

.prop-group {
  padding: 2px 0 0 8px;
  gap: 6px;
  background: #ececec;
  margin-bottom: 1px;
}

.prop {
  display: grid;
  grid-template-columns: 101px 1fr;
  align-items: center;
  height: 25px;
  color: #222;
}

.prop label {
  padding: 2px 0 0 15px;
  color: #1a5cff;
  white-space: nowrap;
}

.prop.plain label {
  color: #222;
}

.field {
  display: flex;
  align-items: center;
  height: 21px;
  padding-left: 2px;
  margin-right: 1px;
  border: 1px solid #d6d6d6;
}

.field input {
  flex: 1;
  min-width: 0;
  height: 19px;
  outline: 0;
}

.prop-scroll {
  right: 4px;
  top: 42px;
  width: 4px;
  height: 149px;
}

.bar {
  width: 9px;
  height: 9px;
  margin: 0 1px;
  vertical-align: 1px;
}

.field .bar {
  margin-bottom: 3px;
}

/* model view */
.work {
  flex: 1;
  min-width: 0;
  display: grid;
  grid-template-rows: 264fr 217fr 324fr;
  gap: 4px;
}

.view {
  position: relative;
  min-height: 0;
  background: #000;
}

.scene {
  display: block;
  width: 100%;
  height: 100%;
}

.cyan,
.red,
.darkred,
.green,
.teal-line,
.white,
.cage-line,
.orbit,
.axis-circle {
  fill: none;
  stroke-width: 3;
}

.cyan { stroke: #00e0e0; }
.red { stroke: #e80000; }
.darkred { stroke: #800000; }
.green { stroke: #007000; }
.teal-line { stroke: #008b8b; }
.white { stroke: #fff; stroke-width: 5; }
.orbit { stroke: #999; }
.axis-circle { stroke: #006a00; }

.foot path {
  stroke: #4c5a20;
  stroke-width: 4;
}

.foot .t { fill: #869a4c; }
.foot .f { fill: #a9c263; }
.foot .r { fill: #6b7a3a; }

.beam path {
  fill: #20a020;
  fill-opacity: .5;
}

.beam .edge {
  fill: none;
  stroke: #4fe04f;
  stroke-width: 4;
  stroke-opacity: .6;
}

.cage path {
  stroke: #8c7c7a;
  stroke-width: 48;
}

.cage-line {
  stroke: #8c7c7a;
  stroke-width: 2;
}

.axis-name {
  fill: #fff;
  font-size: 48px;
}

.note {
  fill: #008e8e;
  font-family: "Liberation Mono", monospace;
  font-style: italic;
  font-size: 42px;
}

.note.small {
  font-size: 32px;
}

.label {
  fill: #fff;
  font-family: "Liberation Mono", monospace;
  font-style: italic;
  font-size: 34px;
}

.axes {
  font: 42px "Liberation Sans", sans-serif;
}

.handle {
  position: absolute;
  display: flex;
  align-items: center;
  justify-content: center;
  background: #4a4a4a;
}

.handle.left,
.handle.right {
  top: 102px;
  width: 16px;
  height: 62px;
}

.handle.left {
  left: 0;
  clip-path: polygon(0 0, 100% 5px, 100% 57px, 0 100%);
}

.handle.right {
  right: 0;
  clip-path: polygon(100% 0, 0 5px, 0 57px, 100% 100%);
}

.handle.bottom {
  left: calc(50% - 30px);
  bottom: 0;
  width: 62px;
  height: 16px;
  clip-path: polygon(5px 0, 57px 0, 100% 100%, 0 100%);
}

.handle svg {
  width: 6px;
  height: 10px;
}

.handle.bottom svg {
  width: 10px;
  height: 6px;
}

.view-tools {
  position: absolute;
  right: 0;
  top: 0;
  width: 32px;
  height: 246px;
  padding: 13px 0;
  display: flex;
  flex-direction: column;
  align-items: center;
  justify-content: space-between;
  background: #fafafa;
}

.view-tools button {
  display: flex;
  flex-direction: column;
  align-items: center;
  gap: 8px;
}

.view-tools svg {
  display: block;
  width: 20px;
  height: 20px;
}

.view-tools hr {
  width: 23px;
  margin: 0;
  border: 0;
  border-top: 1px solid #555;
}

.two-d {
  font-size: 8px;
  font-weight: bold;
  fill: #2a7de1;
}

.rebar-panel {
  position: absolute;
  z-index: 2;
  right: 57px;
  top: 5px;
  width: 133px;
  height: 257px;
  padding: 9px 11px;
  background: #fff;
  border-radius: 7px;
  box-shadow: 0 16px 30px rgba(0, 0, 0, 0.3);
}

.rebar-panel h2 {
  margin: 0 0 19px;
  font-size: 14px;
  font-weight: normal;
  line-height: 20px;
  white-space: nowrap;
}

.checks {
  height: 198px;
  padding: 6px 10px;
  border: 1px solid #ccc;
  border-radius: 3px;
}

.checks label {
  display: flex;
  align-items: center;
  gap: 3px;
  height: 23px;
  white-space: nowrap;
}

.checks input {
  flex: none;
  width: 14px;
  height: 14px;
  accent-color: #2a7de1;
}

/* tables */
.menu {
  flex: none;
  display: flex;
  align-items: center;
  gap: 12px;
  height: 28px;
  padding: 2px 0 0 4px;
}

.menu button:disabled {
  color: #aaa;
}

.grid {
  width: 100%;
  table-layout: fixed;
  border-collapse: collapse;
}

.grid th,
.grid td {
  padding: 0 0 0 3px;
  border: 1px solid #d9d9d9;
  white-space: nowrap;
  overflow: hidden;
}

.grid th {
  padding: 0;
  font-weight: normal;
}

.grid td {
  text-align: left;
}

.grid tbody th {
  padding-top: 2px;
  background: #f0f0f0;
}

.grid .hl {
  background: #80b9fa;
  color: #fff;
  font-weight: bold;
}

.span-grid {
  flex: none;
  margin-left: -1px;
}

.span-grid thead tr {
  height: 17px;
}

.span-grid tbody tr {
  height: 21px;
}

.span-grid .pos {
  line-height: 18px;
}

.span-grid .picked {
  border: 2px solid #777;
}

.span-grid col { width: 81px; }
.span-grid col:nth-child(1) { width: 8px; }
.span-grid col:nth-child(2) { width: 60px; }
.span-grid col:nth-child(3) { width: 61px; }
.span-grid col:nth-child(4) { width: 61px; }
.span-grid col:nth-child(11) { width: 101px; }
.span-grid col:nth-child(13) { width: 101px; }
.span-grid col:nth-child(14) { width: 41px; }
.span-grid col:nth-child(15) { width: 119px; }
.span-grid col:nth-child(18) { width: auto; }

.span-scroll {
  left: 28%;
  right: 28%;
  bottom: 3px;
  height: 4px;
}

.edit-tools {
  flex: none;
  display: flex;
  align-items: center;
  gap: 12px;
  height: 27px;
  padding-top: 2px;
}

.edit-tools button {
  display: flex;
  align-items: center;
  gap: 4px;
}

.edit-tools svg {
  width: 16px;
  height: 16px;
}

.steps,
.moves {
  display: flex;
  gap: 6px;
}

.moves {
  gap: 2px;
  margin: 0 -5px 0 -6px;
}

.steps button,
.moves button {
  justify-content: center;
  width: 26px;
}

.edit-tools .other {
  gap: 6px;
}

.edit-body {
  flex: 1;
  min-height: 0;
  display: flex;
  flex-direction: column;
  margin: 0 12px 11px -1px;
}

.bar-grid {
  flex: none;
}

.bar-grid thead tr,
.bar-grid .blank {
  height: 21px;
}

.bar-grid thead th {
  padding-top: 1px;
}

.bar-grid tbody tr {
  height: 46px;
  background: #c1dfe1;
}

.bar-grid tbody .blank {
  height: 21px;
  background: #fff;
}

.bar-grid td {
  padding-left: 2px;
  color: #000;
  font: 10px/14px "DejaVu Sans Mono", monospace;
}

.bar-grid td.zh {
  font: 12px/14px "Noto Sans CJK SC", sans-serif;
}

.bar-grid td.grade {
  padding: 4px 0 0 4px;
}

.bar-grid td.shape {
  padding: 0;
}

.shape svg {
  display: block;
  width: 216px;
  height: 45px;
  fill: none;
  stroke: #000;
  stroke-width: 2;
}

.shape text {
  fill: #222;
  stroke: none;
  font-family: "Liberation Serif", serif;
}

.shape .dim { fill: #e8201c; }
.shape .big { font-size: 19px; }
.shape .mid { font-size: 16px; }
.shape .low { font-size: 14px; }

.bar-grid col:nth-child(1) { width: 15px; }
.bar-grid col:nth-child(2) { width: 73px; }
.bar-grid col:nth-child(3) { width: 56px; }
.bar-grid col:nth-child(4) { width: 36px; }
.bar-grid col:nth-child(5) { width: 32px; }
.bar-grid col:nth-child(6) { width: 217px; }
.bar-grid col:nth-child(7) { width: 165px; }
.bar-grid col:nth-child(8) { width: 61px; }
.bar-grid col:nth-child(9) { width: 38px; }
.bar-grid col:nth-child(10) { width: 39px; }
.bar-grid col:nth-child(11) { width: 49px; }
.bar-grid col:nth-child(12) { width: 61px; }
.bar-grid col:nth-child(13) { width: 61px; }
.bar-grid col:nth-child(14) { width: 71px; }
.bar-grid col:nth-child(15) { width: 74px; }
.bar-grid col:nth-child(16) { width: 71px; }
.bar-grid col:nth-child(17) { width: 156px; }

.gutter {
  flex: 1;
  width: 15px;
  background: #f0f0f0;
}

.bar-scroll {
  left: 12px;
  right: 106px;
  bottom: 4px;
  height: 4px;
}

.edit-scroll {
  right: 4px;
  bottom: 24px;
  width: 4px;
  height: 54px;
}

/* red emphasis frames */
.mark {
  position: absolute;
  border: 6px solid #ff1f12;
  border-radius: 5px;
}

.mark-row {
  left: 667px;
  top: 168px;
  width: 478px;
  height: 34px;
}

.mark-cell {
  left: 10px;
  top: 167px;
  width: 78px;
  height: 46px;
}

/* status bar */
.status {
  flex: none;
  display: flex;
  align-items: center;
  height: 31px;
  padding-top: 1px;
  background: #fbfbfb;
  white-space: nowrap;
}

.s1 { width: 38px; }
.s2 { width: 50px; }
.s3 { width: 40px; }
.s4 { width: 100px; }
.s5 { width: 60px; }
.s6 { width: 50px; }
.s7 { width: 60px; }
.s8 { width: 50px; }

.snaps {
  display: flex;
  gap: 5px;
}

.snaps button {
  display: flex;
  align-items: center;
  gap: 5px;
  height: 25px;
  padding: 0 2px;
  background: #fff;
  border: 1px solid #888;
  border-radius: 3px;
}

.snaps button.on {
  background: #d9e8fb;
  border-color: #2a7de1;
}

.snaps svg {
  width: 18px;
  height: 18px;
}

.expand {
  width: 16px;
  height: 16px;
  margin: 0 4px 0 16px;
}

.done {
  display: flex;
  align-items: center;
  gap: 6px;
  margin-left: auto;
  margin-right: 10px;
}

.done svg {
  width: 14px;
  height: 14px;
}
```
